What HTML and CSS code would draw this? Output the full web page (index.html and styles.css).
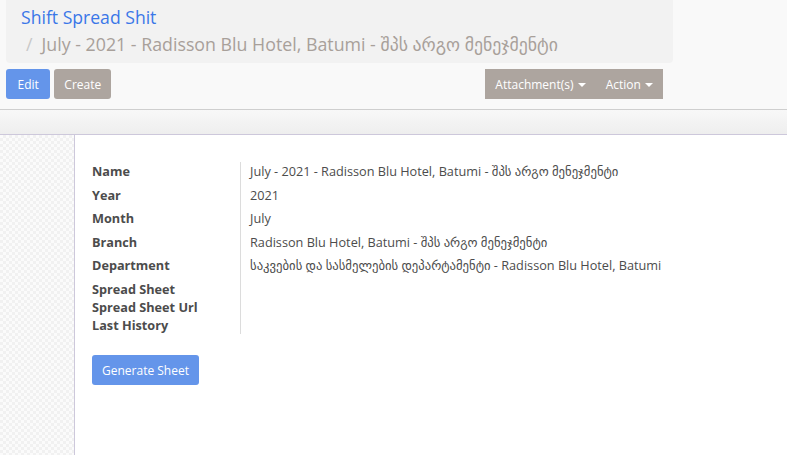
FILE: index.html
```html
<!DOCTYPE html>
<html>
<head>
<meta charset="utf-8">
<link rel="stylesheet" href="styles.css">
</head>
<body>
<div class="control-panel">
  <div class="breadcrumb">
    <a class="bc-root">Shift Spread Shit</a>
    <div class="bc-active"><span class="bc-sep">/</span>July - 2021 - Radisson Blu Hotel, Batumi - შპს არგო მენეჯმენტი</div>
  </div>
  <div class="cp-buttons">
    <div class="left-btns">
      <button class="btn btn-primary btn-edit">Edit</button>
      <button class="btn btn-default btn-create">Create</button>
    </div>
    <div class="btn-group">
      <button class="btn btn-default btn-drop">Attachment(s) <span class="caret"></span></button>
      <button class="btn btn-default btn-drop">Action <span class="caret"></span></button>
    </div>
  </div>
</div>
<div class="statusbar"></div>
<div class="content">
  <div class="gutter"></div>
  <div class="sheet">
    <div class="group">
      <div class="labels">
        <div class="lbl row">Name</div>
        <div class="lbl row">Year</div>
        <div class="lbl row">Month</div>
        <div class="lbl row">Branch</div>
        <div class="lbl row">Department</div>
        <div class="lbl row-s">Spread Sheet</div>
        <div class="lbl row-s">Spread Sheet Url</div>
        <div class="lbl row-s">Last History</div>
      </div>
      <div class="values">
        <div class="val row">July - 2021 - Radisson Blu Hotel, Batumi - შპს არგო მენეჯმენტი</div>
        <div class="val row">2021</div>
        <div class="val row">July</div>
        <div class="val row">Radisson Blu Hotel, Batumi - შპს არგო მენეჯმენტი</div>
        <div class="val row">საკვების და სასმელების დეპარტამენტი - Radisson Blu Hotel, Batumi</div>
      </div>
    </div>
    <button class="btn btn-primary btn-gen">Generate Sheet</button>
  </div>
</div>
</body>
</html>
```
FILE: styles.css
```css
html, body {
  margin: 0;
  padding: 0;
  height: 100%;
  overflow: hidden;
}
body {
  font-family: "Open Sans", "DejaVu Sans", sans-serif;
  font-size: 12.7px;
  color: #4c4c4c;
  background: #f9f9f9;
  display: flex;
  flex-direction: column;
}
.control-panel {
  background: #f9f9f9;
  border-bottom: 1px solid #cfcfcf;
  padding: 0 114px 10px 6px;
}
.breadcrumb {
  background: #f2f2f2;
  border-radius: 0 0 4px 4px;
  height: 63px;
  padding: 0 0 0 15px;
  box-sizing: border-box;
}
.bc-root {
  display: block;
  color: #3a77e8;
  font-size: 17.6px;
  line-height: 20px;
  padding-top: 7px;
}
.bc-active {
  color: #a8a09a;
  font-size: 17.8px;
  line-height: 20px;
  padding-top: 7px;
  white-space: nowrap;
}
.bc-sep {
  color: #c8c8c8;
  padding: 0 9px 0 5px;
}
.cp-buttons {
  display: flex;
  justify-content: space-between;
  margin: 6px 10px 0 0;
}
.left-btns {
  display: flex;
  gap: 4px;
}
.btn {
  font-family: inherit;
  font-size: 12px;
  color: #fff;
  border: 0;
  border-radius: 3px;
  height: 30px;
  padding: 0 11px;
  cursor: pointer;
}
.btn-edit {
  padding: 0 11.5px;
}
.btn-create {
  padding: 0 10px;
}
.btn-primary {
  background: #6495ea;
}
.btn-default {
  background: #ada59f;
}
.btn-group {
  display: flex;
  background: #ada59f;
  border-radius: 3px;
}
.btn-drop {
  border-radius: 0;
  padding: 0 10px;
}
.caret {
  display: inline-block;
  width: 0;
  height: 0;
  border-left: 4px solid transparent;
  border-right: 4px solid transparent;
  border-top: 4px solid #fff;
  vertical-align: middle;
  margin-left: 1px;
}
.statusbar {
  height: 24px;
  background: linear-gradient(#f8f8f8, #eeeeee);
  border-bottom: 1px solid #cdc8db;
}
.content {
  flex: 1;
  display: flex;
}
.gutter {
  width: 74px;
  background-color: #fbfbfb;
  background-image: conic-gradient(#f1f1f1 25%, transparent 0 50%, #f1f1f1 0 75%, transparent 0);
  background-size: 6px 6px;
}
.sheet {
  flex: 1;
  background: #fff;
  border-left: 1px solid #cdc8db;
  padding: 27px 0 0 17px;
}
.group {
  display: flex;
}
.labels {
  width: 148px;
  border-right: 1px solid #dcdcdc;
}
.lbl {
  font-weight: bold;
  color: #4c4c4c;
  white-space: nowrap;
}
.row {
  height: 23.5px;
  line-height: 19px;
}
.row-s {
  height: 18.3px;
  line-height: 18.3px;
}
.values {
  padding-left: 9px;
}
.val {
  white-space: nowrap;
}
.btn-gen {
  margin-top: 21px;
  padding: 0 10px;
}
```
